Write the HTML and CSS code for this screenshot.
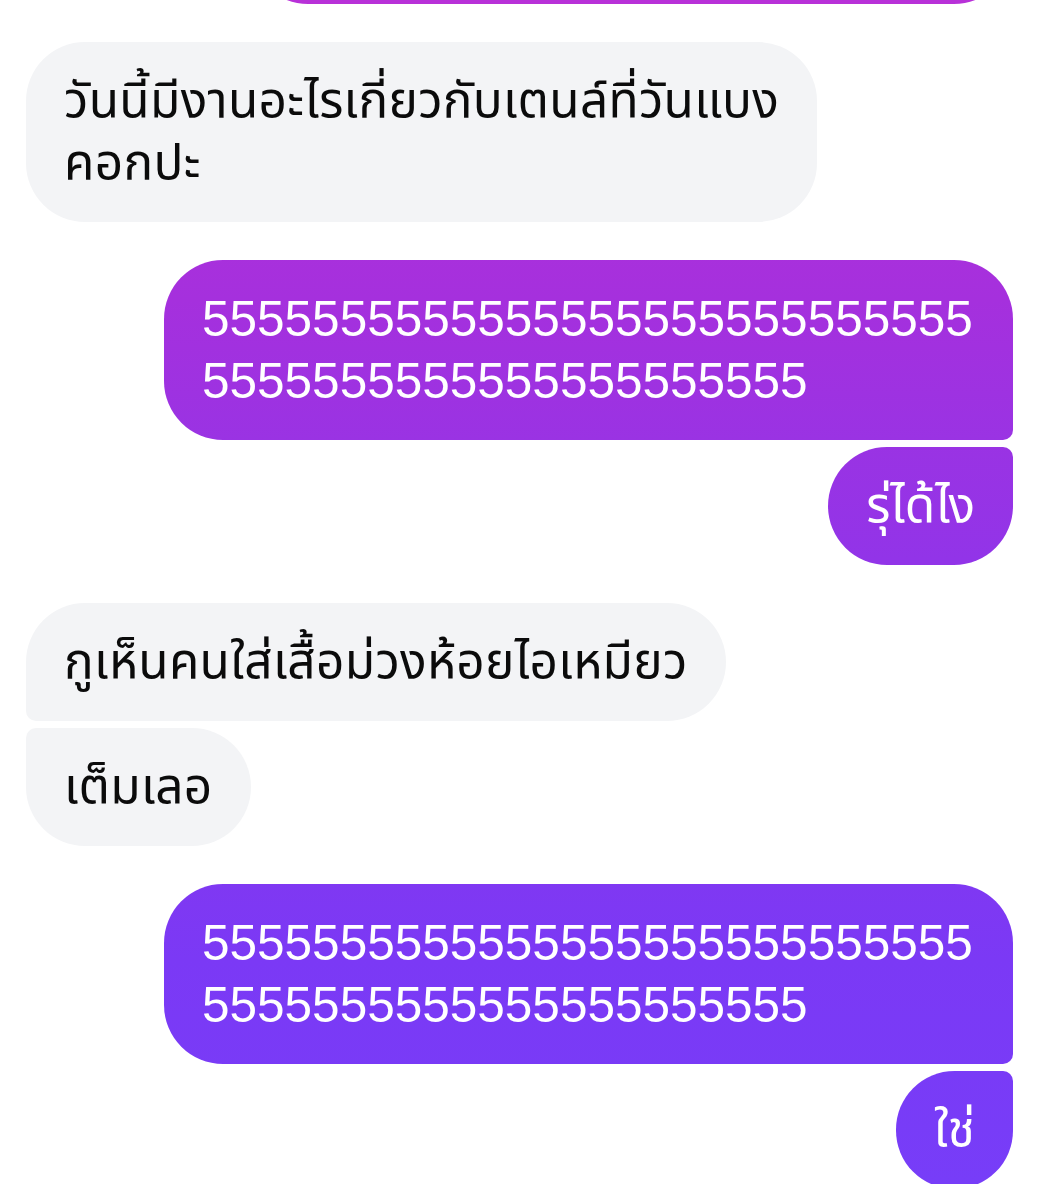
FILE: index.html
```html
<!DOCTYPE html>
<html lang="th">
<head>
<meta charset="utf-8">
<title>Chat</title>
<link rel="stylesheet" href="styles.css">
</head>
<body>
<main class="chat">
  <section class="group">
    <div class="row sent"><div class="bubble out single scrolled" aria-hidden="true"></div></div>
  </section>

  <section class="group">
    <div class="row"><div class="bubble in single">วันนี้มีงานอะไรเกี่ยวกับเตนล์ที่วันแบง<br>คอกปะ</div></div>
  </section>

  <section class="group">
    <div class="row sent"><div class="bubble out digits out-first">55555555555555555555555555555555555555555555555555</div></div>
    <div class="row sent"><div class="bubble out out-last">รุ่ได้ไง</div></div>
  </section>

  <section class="group">
    <div class="row"><div class="bubble in in-first">กูเห็นคนใส่เสื้อม่วงห้อยไอเหมียว</div></div>
    <div class="row"><div class="bubble in in-last">เต็มเลอ</div></div>
  </section>

  <section class="group">
    <div class="row sent"><div class="bubble out digits out-first">55555555555555555555555555555555555555555555555555</div></div>
    <div class="row sent"><div class="bubble out out-last">ใช่</div></div>
  </section>
</main>
</body>
</html>
```

FILE: styles.css
```css
html, body {
  margin: 0;
  padding: 0;
  background: #ffffff;
}

body {
  font-family: "Liberation Sans", "Noto Sans Thai", "Noto Sans", sans-serif;
  overflow: hidden;
}

.chat {
  display: flex;
  flex-direction: column;
  gap: 38px;
  padding: 0 24px 0 26px;
}

.group {
  display: flex;
  flex-direction: column;
  gap: 7px;
}

.row {
  display: flex;
  justify-content: flex-start;
}

.row.sent {
  justify-content: flex-end;
}

.bubble {
  box-sizing: border-box;
  max-width: 849px;
  padding: 28px 38px;
  font-size: 49.5px;
  line-height: 62px;
  border-radius: 59px;
}

.bubble.in {
  background: #f3f4f6;
  color: #0b0b0b;
}

.bubble.out {
  color: #ffffff;
  background-image: linear-gradient(to bottom,
    #b831d8 0px,
    #a530dd 300px,
    #9a33e3 440px,
    #9234e8 560px,
    #8437ef 800px,
    #7b39f5 960px,
    #773df8 1184px);
  background-attachment: fixed;
}

.bubble.in {
  letter-spacing: 0.3px;
}

.digits {
  word-break: break-all;
}

.scrolled {
  width: 764px;
  height: 118px;
  margin-top: -114px;
}

.out-first { border-radius: 59px 59px 10px 59px; }
.out-last  { border-radius: 59px 10px 59px 59px; }
.in-first  { border-radius: 59px 59px 59px 10px; }
.in-last   { border-radius: 10px 59px 59px 59px; }
```
